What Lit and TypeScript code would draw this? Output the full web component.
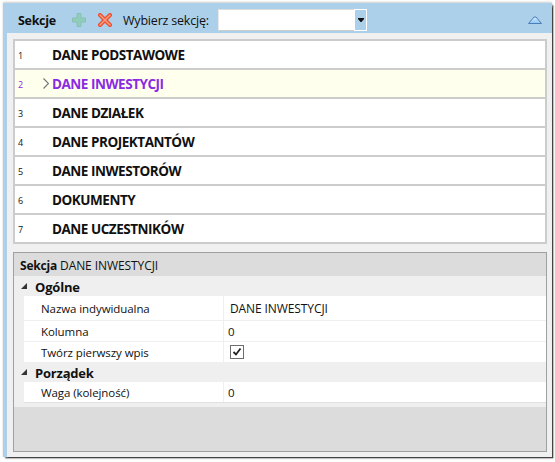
import { LitElement, html, css, svg } from "lit";
import { customElement } from "lit/decorators.js";

const SECTIONS = ["DANE PODSTAWOWE","DANE INWESTYCJI","DANE DZIAŁEK","DANE PROJEKTANTÓW","DANE INWESTORÓW","DOKUMENTY","DANE UCZESTNIKÓW"];

@customElement("app-root")
export class AppRoot extends LitElement {
  static styles = css`
    :host { display: block; width: 555px; height: 462px; background: #fff; font-family: "Open Sans", "Noto Sans", sans-serif; color: #111; overflow: hidden; }
    .win { box-sizing: border-box; width: 549px; height: 454px; margin: 3px 0 0 3px; background: #f0f0f0; border-left: 4px solid #acd0e9; box-shadow: 1.5px 1.5px 1.5px #444, 0 -1px 2px #ccc; display: flex; flex-direction: column; }
    .head { height: 30px; background: #acd0e9; display: flex; align-items: center; box-sizing: border-box; margin-left: -4px; padding: 4px 0 0 15px; flex: none; }
    .title { font-weight: 700; font-size: 12.5px; letter-spacing: -0.3px; width: 54px; margin-top: 1px; }
    .icon { display: block; flex: none; }
    .del { margin-left: 12px; }
    .lbl { font-size: 12.5px; margin-left: 11px; letter-spacing: -0.2px; width: 88px; white-space: nowrap; }
    .combo { display: flex; margin-left: 7px; height: 22px; width: 149px; box-sizing: border-box; background: #fff; justify-content: flex-end; border: 1px solid; border-color: #ddd #fff #ccc #e8e8e8; }
    .drop { width: 11px; background: #acd0e9; display: flex; align-items: center; justify-content: center; margin: -1px -1px -1px 0; border: 1px solid #fff; }
    .spacer { flex: 1; }
    .collapse { margin-right: 10px; margin-top: -1px; }
    .body { flex: 1; display: flex; flex-direction: column; padding: 6px 5px 5px 6px; min-height: 0; }
    .list { border: 2px solid #ccc; background: #ccc; display: flex; flex-direction: column; gap: 2px; flex: none; }
    .row { height: 27px; background: #fff; display: flex; align-items: center; position: relative; padding-left: 37px; font-weight: 700; font-size: 13.5px; letter-spacing: -0.47px; }
    .row.sel { background: #ffffee; color: #8a2be2; }
    .num { position: absolute; left: 3px; top: 50%; transform: translateY(-50%); font-size: 9px; font-weight: 400; letter-spacing: 0; }
    .chev { position: absolute; left: 28px; top: 8px; }
    .props { margin-top: 8px; flex: 1; border: 1px solid #a0a0a0; display: flex; flex-direction: column; background: #dcdcdc; min-height: 0; }
    .phead { height: 23px; box-sizing: border-box; padding: 2px 0 0 6px; display: flex; align-items: center; gap: 3px; font-size: 12px; letter-spacing: -0.2px; flex: none; }
    .phead span { letter-spacing: -0.08px; }
    .grid { background: #efefef; flex: none; padding-bottom: 4px; }
    .cat { height: 20px; box-sizing: border-box; padding: 2px 0 0 21px; display: flex; align-items: center; font-weight: 700; font-size: 13px; letter-spacing: -0.2px; position: relative; }
    .tri { position: absolute; left: 7px; top: 7px; }
    .prop { margin-left: 10px; display: grid; grid-template-columns: 200px 1fr; background: #fff; border-bottom: 1px solid #efefef; font-size: 11.5px; letter-spacing: -0.08px; align-items: stretch; height: 20px; }
    .prop.tall { height: 24px; }
    .prop.flush { border-bottom: none; }
    .prop.last { border-bottom-color: #e0e0e0; }
    .prop > div { display: flex; align-items: center; }
    .k { padding-left: 17px; border-right: 1px solid #efefef; }
    .v { padding-left: 4px; }
    .v.ind { padding-left: 6px; font-size: 12px; letter-spacing: -0.1px; }
    .chk { width: 12px; height: 12px; border: 1px solid #6d6d6d; background: #fff; display: flex; align-items: center; justify-content: center; margin-left: 2px; }
  `;

  render() {
    return html`<div class="win">
      <div class="head">
        <span class="title">Sekcje</span>
        <svg class="icon" width="14" height="14" viewBox="0 0 14 14"><path d="M5 .5h4v4.500h4.500v4H9v4.500H5V9H.5V5H5z" fill="#90cdb9" stroke="#86c2b4" stroke-width="1"/></svg>
        <svg class="icon del" width="14" height="14" viewBox="0 0 14 14"><path d="M2 2l10 10M12 2 2 12" stroke="#e8502f" stroke-width="4" stroke-linecap="round" fill="none"/><path d="M2 2l10 10M12 2 2 12" stroke="#ff9a7c" stroke-width="1.500" stroke-linecap="round" fill="none"/></svg>
        <span class="lbl">Wybierz sekcję:</span>
        <div class="combo"><div class="drop"><svg width="6" height="4" viewBox="0 0 6 4"><path d="M0 0h6v1L3.500 4h-1L0 1z" fill="#111"/></svg></div></div>
        <div class="spacer"></div>
        <svg class="icon collapse" width="14" height="8" viewBox="0 0 14 8"><defs><linearGradient id="g" x1="0" y1="0" x2="0" y2="1"><stop offset="0" stop-color="#d8ecff"/><stop offset="1" stop-color="#8cc4f4"/></linearGradient></defs><path d="M.5 7.500 6 1h2l5.500 6.500z" fill="url(#g)" stroke="#4a7fb5"/></svg>
      </div>
      <div class="body">
        <div class="list">
          ${SECTIONS.map((s, i) => html`<div class="row ${i === 1 ? "sel" : ""}"><span class="num">${i + 1}</span>${i === 1 ? html`<svg class="chev" width="6" height="11" viewBox="0 0 6 11"><path d="M.5.5l5 5-5 5" fill="none" stroke="#777" stroke-width="1.200"/></svg>` : ""}${s}</div>`)}
        </div>
        <div class="props">
          <div class="phead"><b>Sekcja</b><span>DANE INWESTYCJI</span></div>
          <div class="grid">
            <div class="cat">${this.tri()}Ogólne</div>
            <div class="prop tall"><div class="k">Nazwa indywidualna</div><div class="v ind">DANE INWESTYCJI</div></div>
            <div class="prop"><div class="k">Kolumna</div><div class="v">0</div></div>
            <div class="prop flush"><div class="k">Twórz pierwszy wpis</div><div class="v"><span class="chk"><svg width="10" height="10" viewBox="0 0 10 10"><path d="M1.500 5l2.500 2.500L8.500 1.500" fill="none" stroke="#222" stroke-width="1.800"/></svg></span></div></div>
            <div class="cat">${this.tri()}Porządek</div>
            <div class="prop last"><div class="k">Waga (kolejność)</div><div class="v">0</div></div>
          </div>
        </div>
      </div>
    </div>`;
  }

  tri() {
    return html`<svg class="tri" width="6" height="6" viewBox="0 0 6 6">${svg`<path d="M6 0v6H0z" fill="#333"/>`}</svg>`;
  }
}
